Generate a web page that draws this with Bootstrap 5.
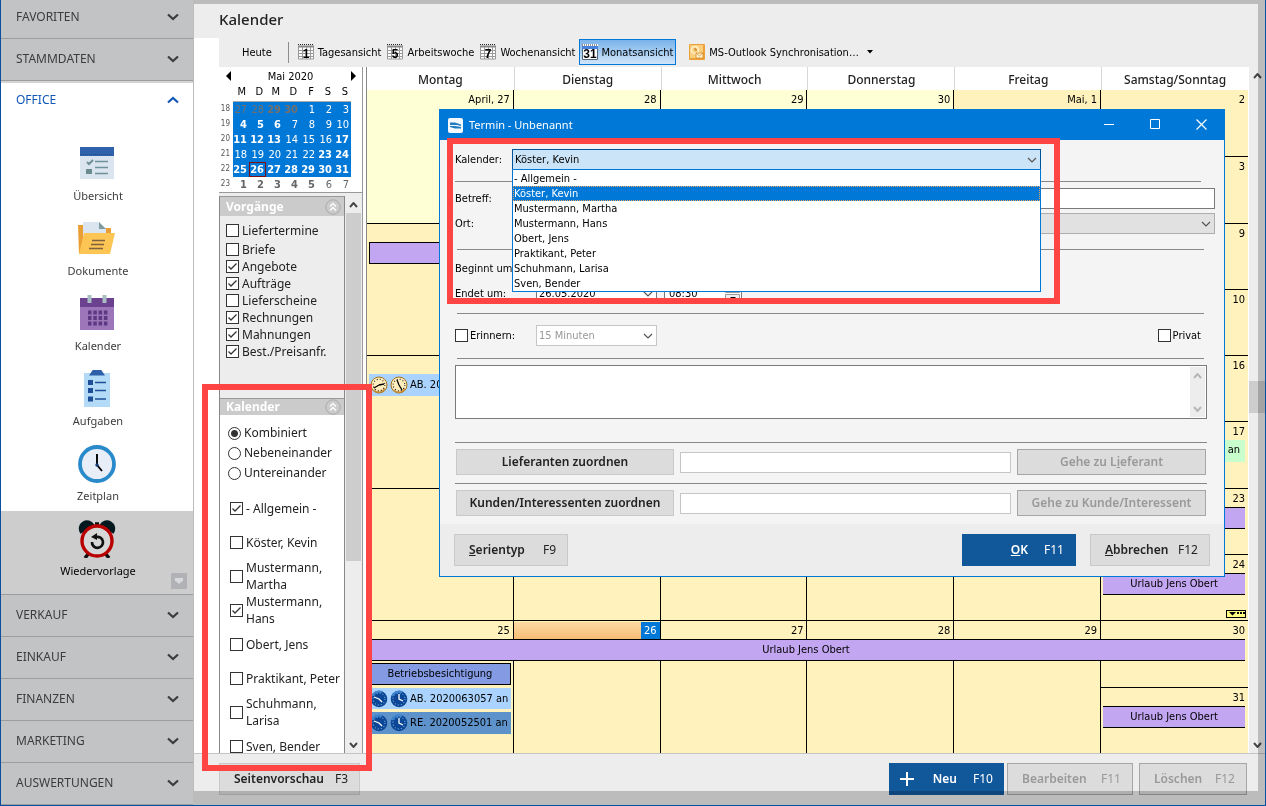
<!DOCTYPE html>
<html lang="de">
<head>
<meta charset="utf-8">
<meta name="viewport" content="width=device-width, initial-scale=1">
<title>Kalender</title>
<link href="https://cdn.jsdelivr.net/npm/bootstrap@5.3.0/dist/css/bootstrap.min.css" rel="stylesheet">
<style>
:root{--blue:#0078d7;--navy:#11589b;--line:#9b9b9b;--cell:#fff2bd;--ui:"Noto Sans","Open Sans",sans-serif;--small:"DejaVu Sans Condensed","Liberation Sans",sans-serif}
body{font:12px/16px var(--ui);color:#222;background:#fff}
.app{height:100vh;border:1px solid #0a4f9f;border-top:0;overflow:hidden}
button,input,select,textarea{font:inherit;border-radius:0;margin:0}
a{text-decoration:none;color:inherit}
.tiny{font:11px/15px var(--small);color:#000}
/* navigation */
.side{width:193px;flex:none;border-right:1px solid #bcbcbc;overflow:hidden}
.side-head{height:42px;padding:0 14px 2px 15px;background:#c2c3c4;border:0;border-bottom:1px solid #9d9d9d;color:#3c3c3c;width:100%;flex:none}
.side-head.open{background:#fff;color:#1158b5;border-bottom:0;border-top:2px solid #d4d4d4;padding-bottom:6px}
.side-head.cut{height:39px;padding-bottom:4px}
.side-item{height:75px;padding:9px 0 0 2px;color:#3c3c3c;font-size:11px;line-height:16px;flex:none}
.side-item svg{width:38px;height:38px;display:block;margin:0 2px 5px 0}
.side-item.sel{background:#cdcdcd;color:#000;height:84px;border-bottom:1px solid #9d9d9d;position:relative}
.corner{position:absolute;right:6px;bottom:5px;width:16px;height:16px;background:#b0b2b6;border:0;padding:0}
.side-item .corner svg{width:16px;height:16px;margin:0}
/* frame */
.topline{height:4px;background:#bcbcbc;flex:none}
.shade{position:absolute;z-index:8;mix-blend-mode:multiply;background:#cbcbcb;pointer-events:none}
.shade-r{right:0;top:4px;bottom:14px;width:7px}
.shade-b{left:0;right:0;bottom:0;height:14px}
.titlebar{height:34px;background:#ededed;padding:0 0 4px 25px}
.titlebar h1{font-size:15px;font-weight:500;margin:0}
.work{padding-left:25px}
.toolbar{height:29px;background:#ededed;padding:1px 0 2px 15px;flex:none}
.tool{border:1px solid transparent;background:none;padding:0 2px;height:26px;white-space:nowrap;color:#000;font:11px/15px var(--small)}
.tool.heute{padding:0 7px}
.tool.on{border-color:var(--blue);background:linear-gradient(#7ab3ea,#d0e5fa)}
.tool.outlook{margin-left:10px}
.vr-line{width:1px;height:21px;background:#8d8d8d;margin:0 6px 0 8px}
/* left column */
.left{width:144px;flex:none;background:#ededed;border-right:1px solid #999}
.mini{background:#fff;border-bottom:1px solid #999;height:126px;flex:none}
.mini-top{height:18px;padding:0 5px}
.mini-top button{border:0;background:none;padding:0;width:8px;height:14px;display:flex}
.mini table{font:11px/14px "DejaVu Sans Condensed",sans-serif;width:132px;table-layout:fixed;text-align:right}
.mini th{font-weight:400;text-align:right;color:#000;padding:0 3px 0 0}
.mini thead th{height:16px;line-height:13px;padding-bottom:2px}
.mini thead th+th{border-bottom:1px solid #aaa}
.mini td,.mini th{width:17px}
.mini td{padding:1px 2px 0 0;color:#fff;background:var(--blue);height:15px;white-space:nowrap}
.mini td b{margin-left:-6px}
.mini .kw{width:13px;background:none;color:#555;font-size:8px;padding-right:1px;height:15px}
.mini .off,.mini .off b{color:#75706c}
.mini tr:last-child td{background:none;color:#666}
.mini td.today{box-shadow:inset 0 0 0 1px #7d1010}
.mini tbody tr td:nth-child(2){border-left:2px solid #fff}
.panels{width:126px;flex:none;border:solid #888;border-width:0 1px}
.p-head{height:20px;background:#cbcbcb;color:#fff;font-weight:700;padding:0 3px 0 6px;border-top:1px solid #999}
.p-body label,.dlg label{white-space:nowrap}
.chk{appearance:none;width:13px;height:13px;border:1px solid #333;background:#fff;flex:none;display:block}
.chk:checked{background:#fff url("data:image/svg+xml,%3Csvg xmlns='http://www.w3.org/2000/svg' viewBox='0 0 11 11'%3E%3Cpath d='M1.500 5.500 4 8 9.500 2.500' fill='none' stroke='%23333' stroke-width='1.300'/%3E%3C/svg%3E")}
.rad{border-radius:50%}
.rad:checked{background:radial-gradient(circle,#333 0 3px,#fff 4px)}
.vg{padding:4px 0 0 6px}
.vg label{height:17px;gap:3px}
.vg label:first-child{height:21px}
.kl{background:#fff}
.kl .r{padding:8px 0 0 8px}
.kl .r label{height:20px;gap:3px}
.kl .c{padding:8px 0 0 10px}
.kl .c label{height:34px;gap:3px;line-height:17px}
.kl .c span{white-space:normal}
.sb{width:15px;background:#ededed}
.sb .thumb{background:#cdcdcd}
.sb button{border:0;background:none;padding:0;height:17px;width:100%;display:flex;align-items:center;justify-content:center}
.sb button svg{color:#444}
/* month */
.month{border-left:1px solid #888;margin-left:3px;min-width:0}
.days{display:grid;grid-template-columns:repeat(6,1fr);height:23px;font-weight:500;text-align:center;line-height:25px;flex:none}
.days div+div{border-left:1px solid #d8d8d8}
.week{display:grid;grid-template-columns:repeat(6,minmax(0,1fr));grid-template-rows:19px 22px 1fr;flex:1 1 0;min-height:0;background:var(--cell)}
.day{grid-row:1/-1;min-width:0;min-height:0;overflow:hidden;border-top:1px solid #000;display:flex;flex-direction:column}
.week:first-child>.day{border-top:0}
.day:not(.we){border-right:1px solid #000}
.pale{background:#ffffd5}
.date{height:18px;padding:2px 3px 0;text-align:right;flex:none}
.half{flex:1 1 0;min-height:0}
.half+.half{border-top:1px solid #000}
.ev{height:22px;border:solid #000;border-width:1px 0;background:#c3a6f1;text-align:center;line-height:20px;margin:0 3px 0 2px;white-space:nowrap;overflow:hidden;flex:none}
.ev.band{grid-row:2;margin:0 3px 0 0;z-index:1;text-align:center}
.ev.box{border-width:1px;margin-right:2px}
.ev.clk{background:#aad4ff;border:0;text-align:left;display:flex;align-items:center;gap:2px;padding-left:1px;margin:3px 2px 0}
.ev svg{flex:none}
.now{background:linear-gradient(#fdd9a2,#f6bd76);height:17px;padding:0;margin-top:1px}
.now span{background:var(--blue);color:#fff;padding:0 3px;height:17px;display:inline-block;line-height:17px}
.more{position:absolute;right:2px;bottom:2px;width:20px;height:8px;border:1px solid #000;background:#ffff80}
.vsb{width:18px;padding-left:1px;background:#fff;margin-right:-1px}
/* footer */
.foot{height:52px;background:#ededed;border-top:1px solid #c4c4c4;padding:9px 18px 10px 25px;flex:none}
.key{height:32px;background:#dcdcdc;border:1px solid #c9c9c9;padding:0 11px 0 14px;font-weight:600;color:#222;display:flex;align-items:center;white-space:nowrap}
.key small{font-weight:400;font-size:12px}
.key:disabled{border-color:#a6a6a6;color:#999}
.key.prim{background:var(--navy);border-color:var(--navy);color:#fff}
/* dialog */
.dlg{position:absolute;left:245px;top:109px;width:786px;height:468px;z-index:5;background:#f4f4f4;border:1px solid var(--blue)}
.dlg-top{height:30px;background:var(--blue);color:#fff;padding:0 16px 0 8px;font-size:11px}
.dlg-top button{border:0;background:none;padding:0;width:12px;height:12px;display:flex}
.dlg-body{padding:9px 17px 0 15px}
.dlg hr{margin:0;border:0;border-top:1px solid #888;opacity:1;flex:none}
.fld{height:21px;border:1px solid #7a7a7a;background:#fff;padding:0 2px;color:#000}
.lab{width:57px;flex:none}
.dd{appearance:none;background-image:url("data:image/svg+xml,%3Csvg xmlns='http://www.w3.org/2000/svg' viewBox='0 0 10 6'%3E%3Cpath d='M1 1l4 4 4-4' fill='none' stroke='%23555' stroke-width='1.200'/%3E%3C/svg%3E");background-repeat:no-repeat;background-size:10px 6px;background-position:right 3px center}
.list{position:absolute;left:0;right:0;top:20px;z-index:3;background:#fff;border:1px solid var(--blue);margin:0;padding:1px 0 0;list-style:none}
.list li{padding:0 1px;height:15px}
.list .cur{background:var(--blue);color:#fff;outline:1px dotted #f0a35a;outline-offset:-1px}
.assign{gap:6px;padding:0 1px;font:12px/16px var(--ui)}
.wide{width:218px;height:26px;justify-content:center;padding:0}
.goto{width:189px;height:26px;justify-content:center;padding:0}
.light{border-color:#c6c6c6}
.dlg-foot{height:52px;background:#ededed;padding:10px 14px 0}
.marker{position:absolute;border:6px solid #ff4444;pointer-events:none}
.m-left{left:8px;top:384px;width:170px;height:387px;z-index:9}
.m-dlg{left:7px;top:28px;width:613px;height:166px;z-index:9}
</style>
</head>
<body>
<svg class="d-none">
<symbol id="down" viewBox="0 0 12 12"><path d="M1 3.500 6 8l5-4.500" fill="none" stroke="currentColor" stroke-width="2.200"/></symbol>
<symbol id="arr" viewBox="0 0 9 6"><path d="M1 1l3.500 4L8 1" fill="none" stroke="currentColor" stroke-width="1.900"/></symbol>
<symbol id="cal" viewBox="0 0 16 16"><rect x="0" y="2" width="15" height="13" fill="#fff"/><path d="M0 .5h16" stroke="#222" stroke-dasharray="1 1"/><path d="M0 2.500h16" stroke="#888" stroke-width="2"/><path d="M.5 3v12h15V3M0 6.500h16M0 9.500h16M0 12.500h16M4.500 3v12M8.500 3v12M12.500 3v12" fill="none" stroke="#999"/></symbol>
<symbol id="gold" viewBox="0 0 18 18"><circle cx="9" cy="9" r="8" fill="#ffeebb" stroke="#a37018"/><path d="M3 14a8 8 0 0 0 12-1" stroke="#c98f37" stroke-width="1.500" fill="none"/><circle cx="9" cy="9" r="5.800" fill="none" stroke="#222" stroke-width="1.200" stroke-dasharray="1 2.040"/></symbol>
<symbol id="bluec" viewBox="0 0 18 18"><circle cx="9" cy="9" r="8.300" fill="#0b4796"/><path d="M2 6a8 8 0 0 1 10-4" fill="none" stroke="#3e86cf" stroke-width="2"/><circle cx="9" cy="9" r="6" fill="none" stroke="#9fd0ff" stroke-dasharray="1 2.140"/></symbol>
<symbol id="coll" viewBox="0 0 16 16"><circle cx="8" cy="8" r="7.200" fill="none" stroke="#aaa"/><path d="m5 7.500 3-3 3 3m-6 4 3-3 3 3" fill="none" stroke="#fff" stroke-width="1.300"/></symbol>
</svg>
<div class="app d-flex">
<nav class="side d-flex flex-column">
<button class="side-head cut d-flex justify-content-between align-items-center">FAVORITEN<svg width="12" height="12"><use href="#down"/></svg></button>
<button class="side-head d-flex justify-content-between align-items-center">STAMMDATEN<svg width="12" height="12"><use href="#down"/></svg></button>
<button class="side-head open d-flex justify-content-between align-items-center">OFFICE<svg width="12" height="12" viewBox="0 0 12 12"><path d="M1 8.500 6 4l5 4.500" fill="none" stroke="currentColor" stroke-width="2.200"/></svg></button>
<div style="height:18px"></div>
<a href="#" class="side-item d-flex flex-column align-items-center"><svg viewBox="0 0 38 38"><rect x="2" y="2" width="34" height="32" fill="#dbe5f0"/><rect x="2" y="2" width="34" height="9" fill="#2f62ab"/><path d="M3 9.500h32" stroke="#234c8c" stroke-dasharray="1 1"/><path d="m9 17 2 2 4-4" fill="none" stroke="#6d8f96" stroke-width="2"/><path d="M17 16.500h13M17 22.500h13M17 28.500h13" stroke="#6d9298" stroke-width="1.500"/><rect x="8" y="24" width="6" height="5" fill="#6b8b90"/></svg>Übersicht</a>
<a href="#" class="side-item d-flex flex-column align-items-center"><svg viewBox="0 0 38 38"><path d="M0 5h5v29H1zM27 8h6v8h-6z" fill="#e99f36"/><path d="M5 2h16l7 7v9l-23 8z" fill="#dbe5f0"/><path d="m21 2 7 7h-7z" fill="#7f9ca1"/><path d="M6 13h31l-5 21H1z" fill="#fdc554"/><path d="M14 20.500h13M13 24.500h13M11 28.500h14" stroke="#7d6240" stroke-width="1.400"/></svg>Dokumente</a>
<a href="#" class="side-item d-flex flex-column align-items-center"><svg viewBox="0 0 38 38"><rect x="2" y="3" width="34" height="32" fill="#9c76b8"/><path d="M2 3h34v9H2z" fill="#6c418f"/><path d="M11.500 0v8M26.500 0v8" stroke="#a9bec3" stroke-width="4"/><path d="M10 17.500h20M10 23h20M10 28.500h20" stroke="#5e3983" stroke-width="4" stroke-dasharray="3.500 1.800"/></svg>Kalender</a>
<a href="#" class="side-item d-flex flex-column align-items-center"><svg viewBox="0 0 38 38"><path d="M6 3h26v34H6z" fill="#b3daf6"/><path d="M11 5.500 14 1q1-2 5-2t5 2l3 4.500z" fill="#2d60a9"/><path d="M10 12.500h5M10 20.500h5M10 29h5" stroke="#1d4f98" stroke-width="5"/><path d="M17 12.500h11M17 20.500h11M17 29h11" stroke="#1d4f98" stroke-width="1.500"/></svg>Aufgaben</a>
<a href="#" class="side-item d-flex flex-column align-items-center"><svg viewBox="0 0 38 38"><circle cx="19" cy="19" r="17" fill="#e8eef7" stroke="#288acb" stroke-width="3.800"/><path d="M19 9v11l5 6" fill="none" stroke="#000" stroke-width="1.900"/><circle cx="19" cy="20" r="1.700" fill="#153c78"/></svg>Zeitplan</a>
<a href="#" class="side-item sel d-flex flex-column align-items-center"><svg viewBox="0 0 38 38"><path d="M3 12a6 6 0 0 1 12-7zM35 12A6 6 0 0 0 23 5z" fill="#02191f" stroke="#02191f" stroke-width="2.500"/><path d="M17 4h4M11 33l-4 5M27 33l4 5" stroke="#111" stroke-width="3.500"/><circle cx="19" cy="21" r="15" fill="#d7d7d7" stroke="#b90000" stroke-width="3.400"/><path d="M14 22a5.500 5.500 0 1 0 4-5" fill="none" stroke="#111" stroke-width="2.700"/><path d="m13 17 6-4v7z" fill="#111"/></svg>Wiedervorlage<span class="corner"><svg viewBox="0 0 16 16"><path d="M4 5h8v3l-2 1-2 2-2-2-2-1z" fill="#d7d9dc"/></svg></span></a>
<button class="side-head d-flex justify-content-between align-items-center">VERKAUF<svg width="12" height="12"><use href="#down"/></svg></button>
<button class="side-head d-flex justify-content-between align-items-center">EINKAUF<svg width="12" height="12"><use href="#down"/></svg></button>
<button class="side-head d-flex justify-content-between align-items-center">FINANZEN<svg width="12" height="12"><use href="#down"/></svg></button>
<button class="side-head d-flex justify-content-between align-items-center">MARKETING<svg width="12" height="12"><use href="#down"/></svg></button>
<button class="side-head d-flex justify-content-between align-items-center">AUSWERTUNGEN<svg width="12" height="12"><use href="#down"/></svg></button>
</nav>
<main class="flex-fill d-flex flex-column position-relative" style="min-width:0">
<div class="topline"></div>
<header class="titlebar d-flex align-items-center flex-shrink-0"><h1>Kalender</h1></header>
<div class="work flex-fill d-flex flex-column" style="min-height:0">
<div class="toolbar d-flex align-items-center">
<button class="tool heute">Heute</button><span class="vr-line"></span>
<button class="tool d-flex align-items-center gap-1"><svg width="16" height="16"><use href="#cal"/><text x="8" y="14" text-anchor="middle" font-family="Liberation Sans" font-weight="700" font-size="12">1</text></svg>Tagesansicht</button>
<button class="tool d-flex align-items-center gap-1"><svg width="16" height="16"><use href="#cal"/><text x="8" y="14" text-anchor="middle" font-family="Liberation Sans" font-weight="700" font-size="12">5</text></svg>Arbeitswoche</button>
<button class="tool d-flex align-items-center gap-1"><svg width="16" height="16"><use href="#cal"/><text x="8" y="14" text-anchor="middle" font-family="Liberation Sans" font-weight="700" font-size="12">7</text></svg>Wochenansicht</button>
<button class="tool on d-flex align-items-center gap-1"><svg width="16" height="16"><rect width="16" height="16" fill="#fff"/><path d="M0 1h16" stroke="#222" stroke-dasharray="1 1"/><path d="M0 3.500h16" stroke="#4a82e0" stroke-width="3"/><path d="M.5 5v10.500h15V5" fill="none" stroke="#567"/><text x="8" y="14" text-anchor="middle" font-family="Liberation Sans" font-weight="700" font-size="12">31</text></svg>Monatsansicht</button>
<button class="tool outlook d-flex align-items-center gap-1"><svg width="16" height="16"><rect width="16" height="16" rx="1" fill="#eda03a"/><rect x="1" y="1" width="13" height="13" fill="#f9cf7e"/><circle cx="6" cy="6" r="3.500" fill="none" stroke="#fff0c8" stroke-width="1.600"/><path d="M6 4v2h2" fill="none" stroke="#b87014"/><path d="M7 9h7v5H7z" fill="#fff4d6" stroke="#d58b25" stroke-width=".8"/><path d="m7 9 3.500 3L14 9" fill="none" stroke="#d58b25" stroke-width=".8"/></svg>MS-Outlook Synchronisation…<svg width="6" height="4" class="ms-1"><path d="M0 0h6L3 3.500z"/></svg></button>
</div>
<div class="flex-fill d-flex" style="min-height:0">
<aside class="left d-flex flex-column">
<div class="mini">
<div class="mini-top tiny d-flex justify-content-between align-items-center"><button aria-label="Zurück"><svg width="5" height="10" class="m-auto"><path d="M5 0v10L0 5z"/></svg></button>Mai 2020<button aria-label="Weiter"><svg width="5" height="10" class="m-auto"><path d="M0 0v10l5-5z"/></svg></button></div>
<table><thead><tr><th class="kw"></th><th>M</th><th>D</th><th>M</th><th>D</th><th>F</th><th>S</th><th>S</th></tr></thead>
<tbody id="mini"></tbody></table>
</div>
<div class="flex-fill d-flex" style="min-height:0;padding-top:3px">
<div class="panels d-flex flex-column overflow-hidden">
<section class="d-flex flex-column" style="flex:none;height:202px"><div class="p-head d-flex justify-content-between align-items-center">Vorgänge<svg width="16" height="16"><use href="#coll"/></svg></div>
<div class="p-body vg" id="vg"></div></section>
<section class="kl flex-fill d-flex flex-column" style="min-height:0"><div class="p-head d-flex justify-content-between align-items-center">Kalender<svg width="16" height="16"><use href="#coll"/></svg></div>
<div class="p-body r" id="rd"></div><div class="p-body c" id="kc"></div></section>
</div>
<div class="sb d-flex flex-column" style="margin-left:1px"><button aria-label="Hoch"><svg width="9" height="6" style="transform:rotate(180deg)"><use href="#arr"/></svg></button><div class="thumb" style="height:348px"></div><button class="mt-auto" aria-label="Runter"><svg width="9" height="6"><use href="#arr"/></svg></button></div>
</div>
</aside>
<section class="month flex-fill d-flex flex-column">
<div class="days"><div>Montag</div><div>Dienstag</div><div>Mittwoch</div><div>Donnerstag</div><div>Freitag</div><div>Samstag/Sonntag</div></div>
<div class="flex-fill d-flex flex-column tiny" style="min-height:0">
<div class="week"><div class="day pale"><div class="date">April, 27</div></div><div class="day pale"><div class="date">28</div></div><div class="day pale"><div class="date">29</div></div><div class="day pale"><div class="date">30</div></div><div class="day"><div class="date">Mai, 1</div></div><div class="day we"><div class="half"><div class="date">2</div></div><div class="half"><div class="date">3</div></div></div></div>
<div class="week"><div class="day"><div class="date"></div><div class="ev box me-0"></div></div><div class="day"></div><div class="day"></div><div class="day"></div><div class="day"></div><div class="day we"><div class="half"><div class="date">9</div></div><div class="half"><div class="date">10</div></div></div></div>
<div class="week"><div class="day"><div class="date"></div><div class="ev clk mt-0"><svg width="18" height="18"><use href="#gold"/><path d="m9 9-5 3m5-3 5-1" stroke="#000" stroke-width="1.300"/></svg><svg width="18" height="18"><use href="#gold"/><path d="M9 9 7 4m2 5 3 5" stroke="#000" stroke-width="1.300"/></svg><span>AB. 20</span></div></div><div class="day"></div><div class="day"></div><div class="day"></div><div class="day"></div><div class="day we"><div class="half"><div class="date">16</div></div><div class="half"><div class="date">17</div><div class="ev border-0 text-end" style="background:#c8ffcc;padding-right:5px">2 an</div></div></div></div>
<div class="week"><div class="day"></div><div class="day"></div><div class="day"></div><div class="day"></div><div class="day"></div><div class="day we"><div class="half"><div class="date">23</div><div class="ev"></div></div><div class="half position-relative"><div class="date">24</div><div class="ev">Urlaub Jens Obert</div><div class="more"><svg width="18" height="6" class="d-block"><path d="M2 1h7L5.500 4.500zM10 1h2v2h-2zM13 1h2v2h-2zM16 1h2v2h-2z"/></svg></div></div></div></div>
<div class="week"><div class="ev band" style="grid-column:1/-1">Urlaub Jens Obert</div><div class="day" style="grid-column:1"><div class="date">25</div><div style="height:24px;flex:none"></div><div class="ev box" style="background:#849be4">Betriebsbesichtigung</div><div class="ev clk" style="height:21px"><svg width="18" height="18"><use href="#bluec"/><path d="M9 9 4 7m5 2 3 3" stroke="#fff" stroke-width="1.300"/></svg><svg width="18" height="18"><use href="#bluec"/><path d="M9 4v5l4 2" fill="none" stroke="#fff" stroke-width="1.300"/></svg><span>AB. 2020063057 an</span></div><div class="ev clk" style="background:#5d92cb"><svg width="18" height="18"><use href="#bluec"/><path d="M9 9 4 7m5 2 3 3" stroke="#fff" stroke-width="1.300"/></svg><svg width="18" height="18"><use href="#bluec"/><path d="M9 4v5l4 2" fill="none" stroke="#fff" stroke-width="1.300"/></svg><span>RE. 2020052501 an</span></div></div><div class="day" style="grid-column:2"><div class="date now"><span>26</span></div></div><div class="day" style="grid-column:3"><div class="date">27</div></div><div class="day" style="grid-column:4"><div class="date">28</div></div><div class="day" style="grid-column:5"><div class="date">29</div></div><div class="day we" style="grid-column:6"><div class="half"><div class="date">30</div></div><div class="half"><div class="date">31</div><div class="ev">Urlaub Jens Obert</div></div></div></div>
</div>
</section>
<div class="vsb d-flex flex-column"><div class="sb w-100 flex-fill d-flex flex-column"><button aria-label="Hoch"><svg width="9" height="6" style="transform:rotate(180deg)"><use href="#arr"/></svg></button><div class="thumb" style="height:32px;margin-top:297px"></div><button class="mt-auto" aria-label="Runter"><svg width="9" height="6"><use href="#arr"/></svg></button></div></div>
</div>
</div>
<footer class="foot d-flex"><button class="key justify-content-between" style="width:141px">Seitenvorschau <small>F3</small></button>
<button class="key prim ms-auto" style="width:115px;padding:0 10px"><svg width="14" height="14"><path d="M7 0v14M0 7h14" stroke="#fff" stroke-width="2"/></svg><span class="ms-auto me-3">Neu</span><small>F10</small></button>
<button class="key justify-content-between" style="width:126px;margin-left:3px" disabled>Bearbeiten <small>F11</small></button>
<button class="key justify-content-between" style="width:108px;margin-left:6px" disabled>Löschen <small>F12</small></button></footer>

<div class="dlg d-flex flex-column" role="dialog" aria-label="Termin - Unbenannt">
<div class="dlg-top d-flex align-items-center"><svg width="15" height="15" class="flex-shrink-0" style="margin-right:6px"><rect width="15" height="15" rx="2" fill="#f5f9fd"/><path d="M2 4.500h5l6 2V8l-4-1H2zM13 10.500H7L2 9V8h5l6 1z" fill="#1f7cc0"/></svg><span class="me-auto">Termin - Unbenannt</span>
<div class="d-flex" style="gap:34px"><button aria-label="Minimieren"><svg width="11" height="11"><path d="M0 5.500h10" stroke="#fff"/></svg></button><button aria-label="Maximieren"><svg width="11" height="11"><path d="M.5.5h9v9h-9z" fill="none" stroke="#fff"/></svg></button><button aria-label="Schließen"><svg width="11" height="11"><path d="m.5.5 10 10m0-10-10 10" stroke="#fff" stroke-width="1.200"/></svg></button></div></div>
<div class="dlg-body flex-fill tiny d-flex flex-column">
<div class="d-flex align-items-center"><label class="lab" for="k">Kalender:</label><div class="position-relative flex-fill" style="margin-right:166px"><select id="k" class="fld dd w-100 d-block" style="background-color:#cce4f7;border-color:#005499"><option>Köster, Kevin</option></select>
<ul class="list" role="listbox"><li role="option">- Allgemein -</li><li class="cur" role="option">Köster, Kevin</li><li role="option">Mustermann, Martha</li><li role="option">Mustermann, Hans</li><li role="option">Obert, Jens</li><li role="option">Praktikant, Peter</li><li role="option">Schuhmann, Larisa</li><li role="option">Sven, Bender</li></ul></div></div>
<hr style="margin:11px 6px 6px 0">
<div class="d-flex align-items-center" style="margin:0 -8px 4px 0"><label class="lab" for="b">Betreff:</label><input id="b" class="fld flex-fill"></div>
<div class="d-flex align-items-center" style="margin:0 -8px 15px 0"><label class="lab" for="o">Ort:</label><select id="o" class="fld dd flex-fill" style="background-color:#e1e1e1;border-color:#adadad"></select></div>
<hr style="margin:0 3px 8px 2px">
<div class="d-flex align-items-center" style="margin-bottom:4px;gap:7px"><label for="s1" style="width:74px">Beginnt um:</label><select id="s1" class="fld dd" style="width:121px"></select><input aria-label="Beginn Uhrzeit" class="fld" style="width:78px"></div>
<div class="d-flex align-items-center" style="margin-bottom:9px;gap:7px"><label for="s2" style="width:74px">Endet um:</label><select id="s2" class="fld dd" style="width:121px"><option>26.05.2020</option></select><div class="fld d-flex p-0" style="width:78px"><input aria-label="Ende Uhrzeit" class="border-0 p-0 ps-1" value="08:30" style="width:60px"><svg width="15" height="19"><path d="M.5.5h14v8H.5zM.5 10.500h14v8H.5z" fill="#eee" stroke="#999"/><path d="M5 6.500h6l-3-3zM5 13h6l-3 3z"/></svg></div></div>
<hr style="margin:0 3px 11px 2px">
<div class="d-flex align-items-center" style="margin-bottom:12px"><label class="d-flex align-items-center" style="gap:2px;width:81px"><input type="checkbox" class="chk">Erinnern:</label><select aria-label="Erinnerung" class="fld dd" style="width:121px;border-color:#c6c6c6;color:#999" disabled><option>15 Minuten</option></select><label class="d-flex align-items-center ms-auto" style="gap:2px;margin-right:6px"><input type="checkbox" class="chk">Privat</label></div>
<hr style="margin:0 3px 6px 2px">
<div class="d-flex" style="height:54px;border:1px solid #7a7a7a;background:#fff;padding:1px"><textarea aria-label="Notiz" class="border-0 flex-fill p-0" style="resize:none"></textarea><div class="sb d-flex flex-column justify-content-between"><button aria-label="Hoch"><svg width="9" height="6" style="transform:rotate(180deg);color:#b5b5b5"><use href="#arr"/></svg></button><button aria-label="Runter"><svg width="9" height="6" style="color:#b5b5b5"><use href="#arr"/></svg></button></div></div>
<hr style="margin:23px 0 6px">
<div class="assign d-flex align-items-center"><button class="key wide">Lieferanten zuordnen</button><input aria-label="Lieferant" class="fld light flex-fill" style="min-width:0"><button class="key goto" disabled><span>Gehe zu L<u>i</u>eferant</span></button></div>
<hr style="margin:8px 0 6px">
<div class="assign d-flex align-items-center"><button class="key wide">Kunden/Interessenten zuordnen</button><input aria-label="Kunde" class="fld light flex-fill" style="min-width:0"><button class="key goto" disabled>Gehe zu Kunde/Interessent</button></div>
</div>
<div class="dlg-foot d-flex"><button class="key justify-content-between" style="width:114px"><span><u>S</u>erientyp</span><small>F9</small></button><button class="key prim ms-auto" style="width:114px"><span class="ms-auto me-3"><u>O</u>K</span><small>F11</small></button><button class="key justify-content-between" style="width:120px;margin-left:14px"><span><u>A</u>bbrechen</span><small>F12</small></button></div>
<div class="marker m-dlg"></div>
</div>
<div class="marker m-left"></div>
<div class="shade shade-r"></div><div class="shade shade-b"></div>
</main>
</div>
<script>
// mini calendar: week number, then days (b = has appointments, o = other month, t = today)
const weeks=["18|27o 28o 29ob 30ob 1 2 3","19|4b 5b 6b 7 8 9 10","20|11b 12b 13b 14 15 16 17b","21|18 19 20 21 22 23b 24b","22|25b 26bt 27b 28b 29b 30b 31b","23|1b 2b 3b 4b 5b 6 7"];
mini.innerHTML=weeks.map(w=>{const [k,d]=w.split("|");return `<tr><th class="kw">${k}</th>`+d.split(" ").map(x=>{const n=parseInt(x);return `<td class="${x.includes("o")?"off":""} ${x.includes("t")?"today":""}">${x.includes("b")?`<b>${n}</b>`:n}</td>`}).join("")+"</tr>"}).join("");
const box=(t,on,type,cls)=>`<label class="d-flex align-items-center"><input type="${type}" ${type=="radio"?'name="modus"':""} class="chk ${cls}" ${on?"checked":""}><span>${t}</span></label>`;
vg.innerHTML=[["Liefertermine",0],["Briefe",0],["Angebote",1],["Aufträge",1],["Lieferscheine",0],["Rechnungen",1],["Mahnungen",1],["Best./Preisanfr.",1]].map(a=>box(a[0],a[1],"checkbox","")).join("");
rd.innerHTML=["Kombiniert","Nebeneinander","Untereinander"].map((t,i)=>box(t,!i,"radio","rad")).join("");
kc.innerHTML=["- Allgemein -","Köster, Kevin","Mustermann, Martha","Mustermann, Hans","Obert, Jens","Praktikant, Peter","Schuhmann, Larisa","Sven, Bender"].map((t,i)=>box(t,i==0||i==3,"checkbox","")).join("");
</script>
<script src="https://cdn.jsdelivr.net/npm/bootstrap@5.3.0/dist/js/bootstrap.bundle.min.js"></script>
</body>
</html>
